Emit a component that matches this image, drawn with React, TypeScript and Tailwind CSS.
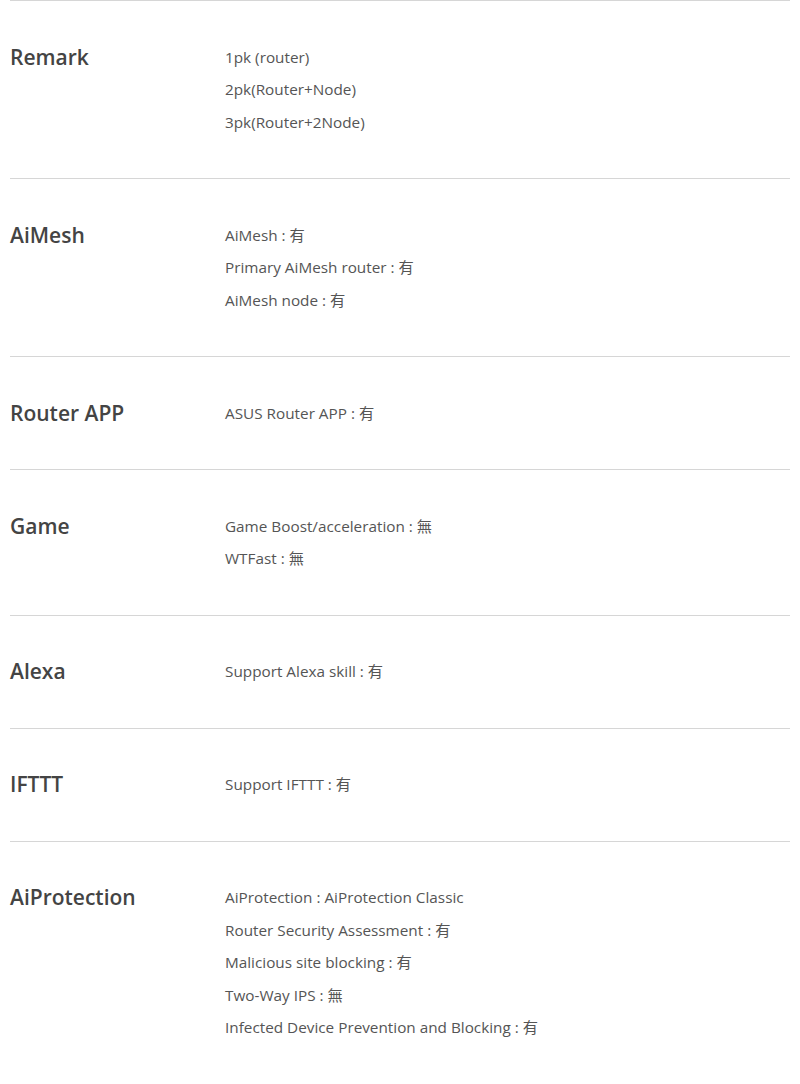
const specs: { title: string; items: string[] }[] = [
  { title: "Remark", items: ["1pk (router)", "2pk(Router+Node)", "3pk(Router+2Node)"] },
  { title: "AiMesh", items: ["AiMesh : 有", "Primary AiMesh router : 有", "AiMesh node : 有"] },
  { title: "Router APP", items: ["ASUS Router APP : 有"] },
  { title: "Game", items: ["Game Boost/acceleration : 無", "WTFast : 無"] },
  { title: "Alexa", items: ["Support Alexa skill : 有"] },
  { title: "IFTTT", items: ["Support IFTTT : 有"] },
  {
    title: "AiProtection",
    items: [
      "AiProtection : AiProtection Classic",
      "Router Security Assessment : 有",
      "Malicious site blocking : 有",
      "Two-Way IPS : 無",
      "Infected Device Prevention and Blocking : 有",
    ],
  },
];

export default function App() {
  return (
    <div
      className="bg-white px-[10px]"
      style={{ fontFamily: '"Open Sans", "Noto Sans CJK TC", sans-serif' }}
    >
      {specs.map((spec) => (
        <div key={spec.title} className="flex border-t border-[#d6d6d6] py-[39.75px]">
          <div className="w-[215px] shrink-0 text-[21px] leading-[32px] font-semibold text-[#444]">
            {spec.title}
          </div>
          <div className="flex flex-col text-[15.3px] leading-[32.5px] text-[#555]">
            {spec.items.map((item) => (
              <div key={item}>{item}</div>
            ))}
          </div>
        </div>
      ))}
    </div>
  );
}
